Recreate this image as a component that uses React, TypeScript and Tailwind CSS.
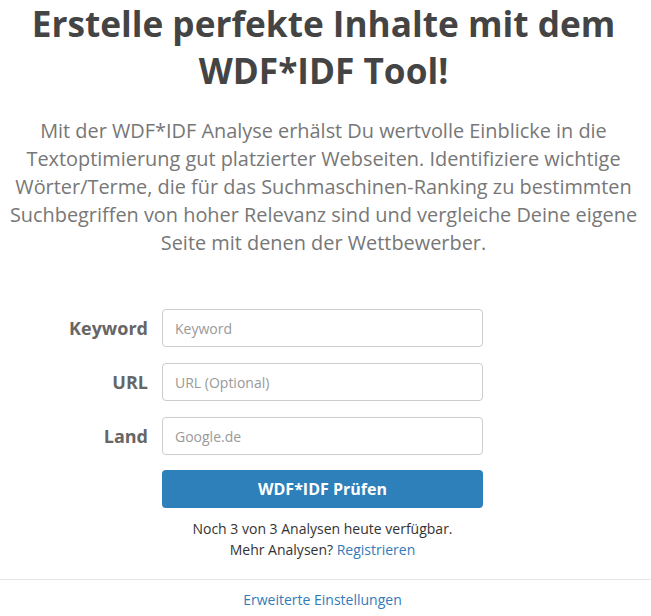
import React from "react";

export default function App() {
  const rows = [
    { label: "Keyword", placeholder: "Keyword" },
    { label: "URL", placeholder: "URL (Optional)" },
    { label: "Land", placeholder: "Google.de" },
  ];
  return (
    <div className="w-[651px] h-[616px] bg-white overflow-hidden" style={{ fontFamily: '"Open Sans", "Noto Sans", sans-serif' }}>
      <div className="pl-[4px] pr-[8px]">
        <h1 className="text-center font-bold text-[35.2px] leading-[47px] text-[#444]">
          Erstelle perfekte Inhalte mit dem
          <br />
          WDF*IDF Tool!
        </h1>
        <p className="mt-[23px] text-center text-[19.9px] leading-[28px] text-[#777]">
          Mit der WDF*IDF Analyse erhälst Du wertvolle Einblicke in die Textoptimierung gut platzierter Webseiten. Identifiziere wichtige Wörter/Terme, die für das Suchmaschinen-Ranking zu bestimmten Suchbegriffen von hoher Relevanz sind und vergleiche Deine eigene Seite mit denen der Wettbewerber.
        </p>
      </div>
      <div className="mt-[52px] flex flex-col gap-[16px]">
        {rows.map((r) => (
          <div key={r.label} className="flex items-center">
            <label className="w-[148px] text-right text-[18px] font-bold text-[#666]">{r.label}</label>
            <input
              className="ml-[14px] w-[321px] h-[38px] rounded-[4px] border border-[#ccc] px-3 text-[14px] text-[#555] placeholder:text-[#999] outline-none"
              placeholder={r.placeholder}
            />
          </div>
        ))}
      </div>
      <div className="ml-[162px] w-[321px] mt-[15px]">
        <button className="w-full h-[38px] rounded-[4px] bg-[#2d80ba] text-white font-bold text-[16px]">
          WDF*IDF Prüfen
        </button>
        <div className="mt-[10px] text-center text-[14px] leading-[21px] text-[#333]">
          Noch 3 von 3 Analysen heute verfügbar.
          <br />
          Mehr Analysen? <a className="text-[#337ab7]">Registrieren</a>
        </div>
      </div>
      <div className="mt-[19px] border-t border-[#e5e5e5]" />
      <div className="mt-[9px] pr-[6px] text-center text-[14px] text-[#337ab7]">Erweiterte Einstellungen</div>
    </div>
  );
}
